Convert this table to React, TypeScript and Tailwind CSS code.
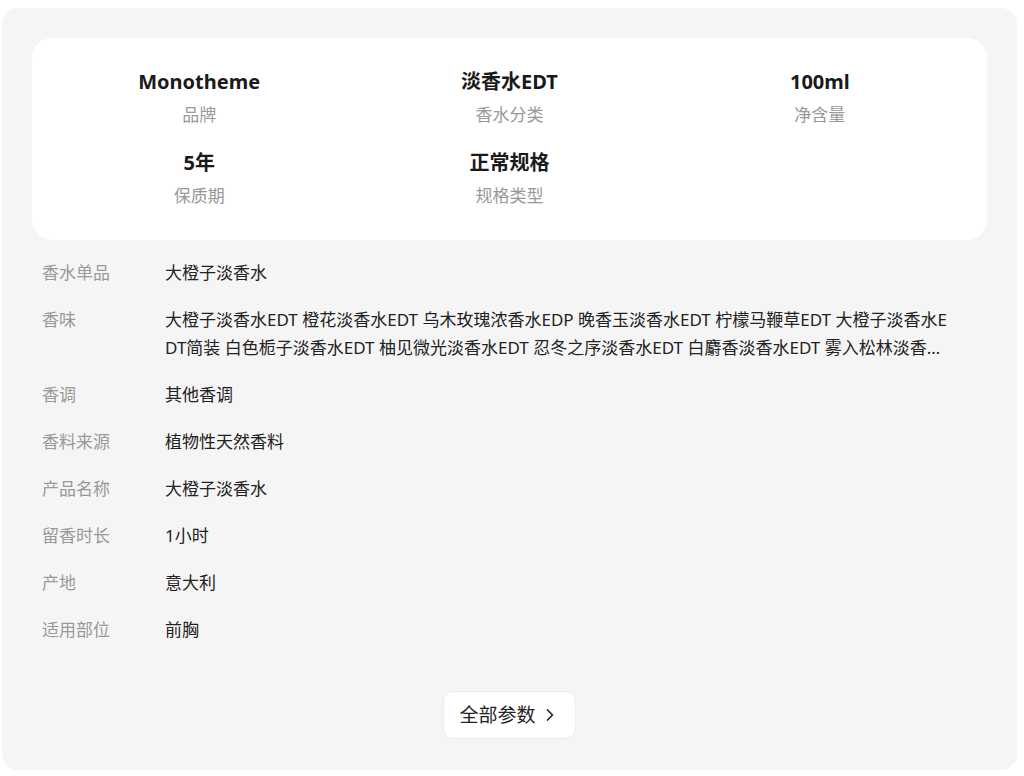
import { ChevronRight } from "lucide-react";

const summary = [
  { value: "Monotheme", label: "品牌" },
  { value: "淡香水EDT", label: "香水分类" },
  { value: "100ml", label: "净含量" },
  { value: "5年", label: "保质期" },
  { value: "正常规格", label: "规格类型" },
];

const params = [
  { label: "香水单品", value: "大橙子淡香水" },
  {
    label: "香味",
    value:
      "大橙子淡香水EDT 橙花淡香水EDT 乌木玫瑰浓香水EDP 晚香玉淡香水EDT 柠檬马鞭草EDT 大橙子淡香水EDT简装 白色栀子淡香水EDT 柚见微光淡香水EDT 忍冬之序淡香水EDT 白麝香淡香水EDT 雾入松林淡香水EDT 琥珀木质淡香水EDT",
  },
  { label: "香调", value: "其他香调" },
  { label: "香料来源", value: "植物性天然香料" },
  { label: "产品名称", value: "大橙子淡香水" },
  { label: "留香时长", value: "1小时" },
  { label: "产地", value: "意大利" },
  { label: "适用部位", value: "前胸" },
];

export default function App() {
  return (
    <div
      className="w-[1024px] h-[776px] bg-white overflow-hidden"
      style={{ fontFamily: '"Noto Sans", "Noto Sans CJK SC", sans-serif' }}
    >
      <div className="ml-[2px] mt-[8px] w-[1015px] h-[762px] bg-[#f5f5f5] rounded-[16px] px-[30px] pt-[30px] flex flex-col">
        {/* summary card */}
        <div className="bg-white rounded-[20px] grid grid-cols-3 px-3 pt-[30px] pb-[32px] gap-y-[22px]">
          {summary.map((s) => (
            <div key={s.label} className="flex flex-col items-center">
              <div className="text-[20px] leading-[28px] font-bold text-[#1a1a1a]">{s.value}</div>
              <div className="mt-[7px] text-[17px] leading-[24px] text-[#999999]">{s.label}</div>
            </div>
          ))}
        </div>

        {/* parameter rows */}
        <div className="mt-[19px] flex flex-col gap-[19px] pl-[10px] pr-[34px]">
          {params.map((p) => (
            <div key={p.label} className="flex text-[17px] leading-[28px]">
              <div className="w-[123px] shrink-0 text-[#999999]">{p.label}</div>
              <div className="flex-1 min-w-0 text-[#222222] break-all line-clamp-2">{p.value}</div>
            </div>
          ))}
        </div>

        <div className="mt-[47px] flex justify-center">
          <button className="h-[48px] px-[15px] bg-white rounded-[10px] border border-[#ececec] flex items-center gap-[4px] text-[19px] text-[#222222]">
            全部参数
            <ChevronRight size={20} strokeWidth={2} />
          </button>
        </div>
      </div>
    </div>
  );
}
